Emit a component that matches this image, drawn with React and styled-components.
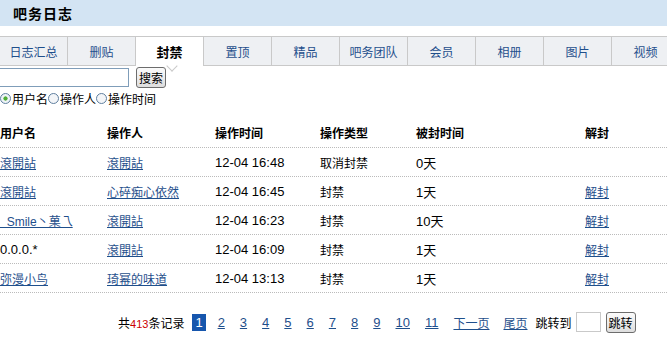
import React from "react"
import styled, { createGlobalStyle } from "styled-components"

const GlobalStyle = createGlobalStyle`
  body {
    margin: 0;
    background: #fff;
    font-family: "Liberation Sans", "Noto Sans CJK SC", sans-serif;
    font-size: 12px;
    color: #000;
  }
`

const Page = styled.div`
  width: 667px;
  height: 344px;
  overflow: hidden;
`
const Header = styled.div`
  height: 26px;
  background: #d3e4f3;
  display: flex;
  align-items: center;
  padding-left: 13px;
  font-size: 14px;
  font-weight: bold;
  letter-spacing: 1px;
`
const Tabs = styled.div`
  margin-top: 10px;
  height: 28px;
  display: flex;
  border-top: 1px solid #c9c9c9;
  border-bottom: 1px solid #c9c9c9;
  background: #eef0f3;
  position: relative;
`
const Tab = styled.div`
  flex: 0 0 68px;
  box-sizing: border-box;
  border-right: 1px solid #c9c9c9;
  display: flex;
  align-items: center;
  justify-content: center;
  position: relative;
  color: ${p => (p.$active ? "#000" : "#1f4f8c")};
  font-weight: ${p => (p.$active ? "bold" : "normal")};
  font-size: ${p => (p.$active ? "13px" : "12px")};
  background: ${p => (p.$active ? "#fff" : "transparent")};
  height: ${p => (p.$active ? "29px" : "28px")};
  z-index: ${p => (p.$active ? 1 : 0)};
`
const Notch = styled.span`
  position: absolute;
  left: 32px;
  bottom: -4px;
  width: 7px;
  height: 7px;
  background: #fff;
  border-right: 1px solid #c9c9c9;
  border-bottom: 1px solid #c9c9c9;
  transform: rotate(45deg);
`
const SearchRow = styled.div`
  display: flex;
  align-items: center;
  margin-top: 1px;
  height: 21px;
`
const SearchInput = styled.input`
  box-sizing: border-box;
  width: 130px;
  height: 19px;
  margin: 0 0 0 -1px;
  border: 1px solid #7f9db9;
  padding: 0;
`
const Button = styled.button`
  box-sizing: border-box;
  height: 21px;
  margin-left: ${p => p.$gap || 7}px;
  padding: 0 2px;
  border: 1px solid #6d6d6d;
  border-radius: 3px;
  background: linear-gradient(#fbfbfb, #dedede);
  font-family: "Noto Sans CJK SC", sans-serif;
  font-size: 12px;
  color: #000;
  line-height: 17px;
`
const RadioRow = styled.div`
  display: flex;
  align-items: center;
  height: 16px;
  margin-top: 2px;
`
const Radio = styled.span`
  width: 11px;
  height: 11px;
  box-sizing: border-box;
  border-radius: 50%;
  border: 1px solid #5f7f9f;
  background: ${p => (p.$checked ? "radial-gradient(circle, #4fae35 0 1.8px, #eef3f7 2.4px)" : "#f3f5f8")};
  margin-right: 1px;
`
const RadioLabel = styled.span`
  font-family: "Noto Sans CJK SC", sans-serif;
  font-size: 12px;
`
const Table = styled.div`
  margin-top: 11px;
`
const Row = styled.div`
  display: grid;
  grid-template-columns: 107px 108px 105px 96px 169px 1fr;
  align-items: center;
  height: ${p => (p.$head ? "30px" : "28px")};
  border-bottom: 1px dotted #bbb;
  font-weight: ${p => (p.$head ? "bold" : "normal")};
`
const Cell = styled.div`
  white-space: nowrap;
  font-size: ${p => (p.$num ? "13px" : "12px")};
`
const Link = styled.a`
  color: #1f4f8c;
  text-decoration: underline;
  cursor: pointer;
`
const Pager = styled.div`
  margin-top: 19px;
  padding-left: 118px;
  display: flex;
  align-items: center;
  height: 20px;
`
const Total = styled.span`
  margin-right: 8px;
  & em {
    font-style: normal;
    color: #c00;
    font-size: 11px;
  }
`
const PageLink = styled.a`
  padding: 1px 3px;
  margin-right: ${p => (p.$word ? 8 : 9)}px;
  font-size: ${p => (p.$word ? "12px" : "13px")};
  color: ${p => (p.$current ? "#fff" : "#1f4f8c")};
  background: ${p => (p.$current ? "#1656ad" : "transparent")};
  text-decoration: ${p => (p.$current ? "none" : "underline")};
  cursor: pointer;
`
const JumpLabel = styled.span`
  margin-left: -3px;
  margin-right: 4px;
`
const JumpInput = styled.input`
  box-sizing: border-box;
  width: 25px;
  height: 20px;
  border: 1px solid #c9c9c9;
  padding: 0;
  margin: 0;
`

const tabs = ["日志汇总", "删贴", "封禁", "置顶", "精品", "吧务团队", "会员", "相册", "图片", "视频"]

const rows = [
  { user: "滾開詀", userLink: true, op: "滾開詀", time: "12-04 16:48", type: "取消封禁", days: "0天", unban: false },
  { user: "滾開詀", userLink: true, op: "心碎痴心依然", time: "12-04 16:45", type: "封禁", days: "1天", unban: true },
  { user: "\u00a0 Smile丶菓乁", userLink: true, op: "滾開詀", time: "12-04 16:23", type: "封禁", days: "10天", unban: true },
  { user: "0.0.0.*", userLink: false, op: "滾開詀", time: "12-04 16:09", type: "封禁", days: "1天", unban: true },
  { user: "弥漫小鸟", userLink: true, op: "琦幂的味道", time: "12-04 13:13", type: "封禁", days: "1天", unban: true },
]

const pages = ["2", "3", "4", "5", "6", "7", "8", "9", "10", "11"]

const App = () => {
  return (
    <Page>
      <GlobalStyle />
      <Header>吧务日志</Header>
      <Tabs>
        {tabs.map(t => (
          <Tab key={t} $active={t === "封禁"}>
            {t}
            {t === "封禁" && <Notch />}
          </Tab>
        ))}
      </Tabs>
      <SearchRow>
        <SearchInput />
        <Button>搜索</Button>
      </SearchRow>
      <RadioRow>
        <Radio $checked />
        <RadioLabel>用户名</RadioLabel>
        <Radio />
        <RadioLabel>操作人</RadioLabel>
        <Radio />
        <RadioLabel>操作时间</RadioLabel>
      </RadioRow>
      <Table>
        <Row $head>
          <Cell>用户名</Cell>
          <Cell>操作人</Cell>
          <Cell>操作时间</Cell>
          <Cell>操作类型</Cell>
          <Cell>被封时间</Cell>
          <Cell>解封</Cell>
        </Row>
        {rows.map((r, i) => (
          <Row key={i}>
            <Cell $num={!r.userLink}>{r.userLink ? <Link>{r.user}</Link> : r.user}</Cell>
            <Cell><Link>{r.op}</Link></Cell>
            <Cell $num>{r.time}</Cell>
            <Cell>{r.type}</Cell>
            <Cell $num>{r.days}</Cell>
            <Cell>{r.unban && <Link>解封</Link>}</Cell>
          </Row>
        ))}
      </Table>
      <Pager>
        <Total>共<em>413</em>条记录</Total>
        <PageLink $current>1</PageLink>
        {pages.map(p => (
          <PageLink key={p}>{p}</PageLink>
        ))}
        <PageLink $word>下一页</PageLink>
        <PageLink $word>尾页</PageLink>
        <JumpLabel>跳转到</JumpLabel>
        <JumpInput />
        <Button $gap={5}>跳转</Button>
      </Pager>
    </Page>
  )
}

export default App
